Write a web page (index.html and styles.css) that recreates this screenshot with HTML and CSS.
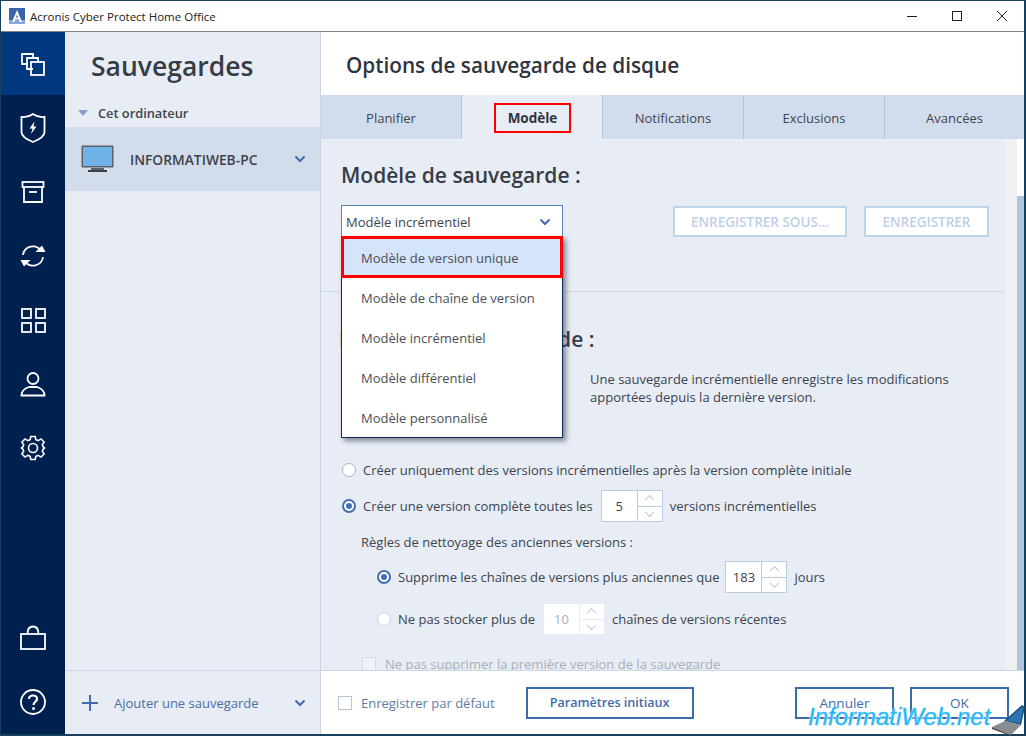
FILE: index.html
```html
<!DOCTYPE html>
<html lang="fr">
<head>
<meta charset="utf-8">
<title>Acronis Cyber Protect Home Office</title>
<link rel="stylesheet" href="styles.css">
</head>
<body>
<div class="window">
  <header class="titlebar">
    <svg class="app-logo" width="16" height="16" viewBox="0 0 16 16"><rect width="16" height="16" fill="#3b63ae"/><rect x="0" y="12" width="16" height="4" fill="#8ba6dc"/><path d="M3 14 L8 2 L13 14 H10.700 L9.800 11.500 H6.200 L5.300 14 Z M7 9.500 H9 L8 6.500 Z" fill="#fff" fill-rule="evenodd"/></svg>
    <span class="app-title">Acronis Cyber Protect Home Office</span>
    <div class="win-controls">
      <svg width="12" height="12" viewBox="0 0 12 12"><path d="M1 6.500 H11" stroke="#222" fill="none"/></svg>
      <svg width="12" height="12" viewBox="0 0 12 12"><rect x="1.500" y="1.500" width="9" height="9" stroke="#222" fill="none"/></svg>
      <svg width="12" height="12" viewBox="0 0 12 12"><path d="M1 1 L11 11 M11 1 L1 11" stroke="#222" fill="none"/></svg>
    </div>
  </header>
  <div class="main">
    <nav class="nav">
      <a class="nav-item active"><svg width="26" height="26" viewBox="0 0 26 26" fill="none" stroke="#fff" stroke-width="1.800"><path d="M8 13 H2 V3 H13 V7"/><path d="M13 18 H7 V7 H18 V11"/><rect x="11" y="11" width="13" height="13"/></svg></a>
      <a class="nav-item"><svg width="26" height="32" viewBox="0 0 26 32" fill="none" stroke="#fff" stroke-width="1.800"><path d="M13 2 C9 5 5 5.500 1.500 5 V20 C1.500 25 8 28 13 30 C18 28 24.500 25 24.500 20 V5 C21 5.500 17 5 13 2 Z"/><path d="M14.500 9.500 L9.500 16.500 H12.500 L11 22 L16.500 14.500 H13.500 Z" fill="#fff" stroke="none"/></svg></a>
      <a class="nav-item"><svg width="24" height="24" viewBox="0 0 24 24" fill="none" stroke="#fff" stroke-width="1.800"><rect x="1.500" y="2" width="21" height="5"/><path d="M3 7 V22 H21 V7"/><path d="M8 12 H16"/></svg></a>
      <a class="nav-item"><svg width="28" height="26" viewBox="0 0 28 26" fill="none" stroke="#fff" stroke-width="1.800"><path d="M4 12 A10 10 0 0 1 22 7.500"/><path d="M24 14 A10 10 0 0 1 6 18.500"/><path d="M16.500 9 H26.500 L23 2.500 Z" fill="#fff" stroke="none"/><path d="M11.500 17 H1.500 L5 23.500 Z" fill="#fff" stroke="none"/></svg></a>
      <a class="nav-item"><svg width="26" height="26" viewBox="0 0 26 26" fill="none" stroke="#fff" stroke-width="1.800"><rect x="2" y="2" width="9" height="9"/><rect x="16" y="2" width="9" height="9"/><rect x="2" y="16" width="9" height="9"/><rect x="16" y="16" width="9" height="9"/></svg></a>
      <a class="nav-item"><svg width="26" height="26" viewBox="0 0 26 26" fill="none" stroke="#fff" stroke-width="1.800"><circle cx="13" cy="7.500" r="5.500"/><path d="M1.500 24.500 C1.500 19.500 6 17 9 16 H17 C20 17 24.500 19.500 24.500 24.500 Z"/></svg></a>
      <a class="nav-item"><svg width="26" height="26" viewBox="0 0 26 26" fill="none" stroke="#fff" stroke-width="1.600"><circle cx="13" cy="13" r="4.500"/><path d="M10.800 1.500 H15.200 L15.900 4.700 L18.200 5.700 L21 3.900 L24.100 7 L22.300 9.800 L23.300 12.100 L24.500 12.800 V13.200 L23.300 13.900 L22.300 16.200 L24.100 19 L21 22.100 L18.200 20.300 L15.900 21.300 L15.200 24.500 H10.800 L10.100 21.300 L7.800 20.300 L5 22.100 L1.900 19 L3.700 16.200 L2.700 13.900 L1.500 13.200 V12.800 L2.700 12.100 L3.700 9.800 L1.900 7 L5 3.900 L7.800 5.700 L10.100 4.700 Z"/></svg></a>
      <div class="nav-spacer"></div>
      <a class="nav-item"><svg width="28" height="26" viewBox="0 0 28 26" fill="none" stroke="#fff" stroke-width="1.800"><rect x="2" y="9" width="24" height="15"/><path d="M8.500 9 C8.500 4 10.500 1.500 14 1.500 C17.500 1.500 19.500 4 19.500 9"/></svg></a>
      <a class="nav-item"><svg width="28" height="28" viewBox="0 0 28 28" fill="none" stroke="#fff" stroke-width="1.800"><circle cx="14" cy="14" r="12"/><path d="M10 11 C10 8.500 12 7.500 14 7.500 C16.500 7.500 18 9 18 11 C18 13.500 14.500 14 14.500 17" stroke-width="2.200"/><circle cx="14.500" cy="20.500" r="1.500" fill="#fff" stroke="none"/></svg></a>
    </nav>
    <aside class="side">
      <h1 class="side-title">Sauvegardes</h1>
      <div class="side-group"><span class="tri"></span>Cet ordinateur</div>
      <div class="side-item">
        <svg width="34" height="28" viewBox="0 0 34 28"><rect x="0.500" y="0.500" width="32" height="22" rx="1" fill="#5c6067"/><rect x="2" y="2" width="29" height="19" fill="#6fb3e8"/><rect x="10" y="23" width="13" height="2" fill="#5c6067"/><rect x="7" y="25" width="19" height="2" fill="#3d4045"/></svg>
        <span class="side-item-name">INFORMATIWEB-PC</span>
        <svg class="chev" width="12" height="8" viewBox="0 0 12 8"><path d="M1.500 1.500 L6 6 L10.500 1.500" fill="none" stroke="#3f6cab" stroke-width="2"/></svg>
      </div>
      <div class="side-footer">
        <svg width="18" height="18" viewBox="0 0 18 18"><path d="M9 1 V17 M1 9 H17" stroke="#3f6cab" stroke-width="2" fill="none"/></svg>
        <span class="side-add">Ajouter une sauvegarde</span>
        <svg class="chev" width="12" height="8" viewBox="0 0 12 8"><path d="M1.500 1.500 L6 6 L10.500 1.500" fill="none" stroke="#3f6cab" stroke-width="2"/></svg>
      </div>
    </aside>
    <section class="panel">
      <h1 class="panel-title">Options de sauvegarde de disque</h1>
      <div class="tabs">
        <div class="tab">Planifier</div>
        <div class="tab active"><span class="tab-mark">Modèle</span></div>
        <div class="tab">Notifications</div>
        <div class="tab">Exclusions</div>
        <div class="tab">Avancées</div>
      </div>
      <div class="content">
        <div class="scroll-body">
          <h2 class="h2 h2-first">Modèle de sauvegarde :</h2>
          <div class="model-row">
            <div class="select">Modèle incrémentiel
              <svg width="12" height="8" viewBox="0 0 12 8"><path d="M1.500 1.500 L6 6 L10.500 1.500" fill="none" stroke="#3f6cab" stroke-width="2"/></svg>
            </div>
            <button class="ghost ghost-as">ENREGISTRER SOUS...</button>
            <button class="ghost ghost-s">ENREGISTRER</button>
          </div>
          <ul class="menu">
            <li class="menu-item sel">Modèle de version unique</li>
            <li class="menu-item">Modèle de chaîne de version</li>
            <li class="menu-item">Modèle incrémentiel</li>
            <li class="menu-item">Modèle différentiel</li>
            <li class="menu-item last">Modèle personnalisé</li>
          </ul>
          <hr class="rule">
          <h2 class="h2 h2-second">Méthode de sauvegarde :</h2>
          <p class="desc">Une sauvegarde incrémentielle enregistre les modifications apportées depuis la dernière version.</p>
          <div class="opt opt-1"><span class="radio"></span><span>Créer uniquement des versions incrémentielles après la version complète initiale</span></div>
          <div class="opt opt-2"><span class="radio on"></span><span>Créer une version complète toutes les</span>
            <span class="spin"><span class="spin-val">5</span><span class="spin-btns"><i class="up"></i><i class="down"></i></span></span>
            <span>versions incrémentielles</span></div>
          <div class="rules-label">Règles de nettoyage des anciennes versions :</div>
          <div class="opt opt-3"><span class="radio on"></span><span>Supprime les chaînes de versions plus anciennes que</span>
            <span class="spin"><span class="spin-val">183</span><span class="spin-btns"><i class="up"></i><i class="down"></i></span></span>
            <span>jours</span></div>
          <div class="opt opt-4"><span class="radio off"></span><span>Ne pas stocker plus de</span>
            <span class="spin dim"><span class="spin-val">10</span><span class="spin-btns"><i class="up"></i><i class="down"></i></span></span>
            <span>chaînes de versions récentes</span></div>
          <div class="opt opt-5"><span class="check dim"></span><span>Ne pas supprimer la première version de la sauvegarde</span></div>
        </div>
        <div class="track"></div>
        <div class="bar"><div class="thumb"></div></div>
      </div>
      <footer class="footer">
        <span class="check"></span>
        <span class="save-default">Enregistrer par défaut</span>
        <button class="btn btn-reset">Paramètres initiaux</button>
        <button class="btn btn-cancel">Annuler</button>
        <button class="btn btn-ok">OK</button>
      </footer>
    </section>
  </div>
</div>
<div class="watermark">InformatiWeb.net</div>
<svg class="wm-laptop" width="34" height="32" viewBox="0 0 34 32"><path d="M12 17 L30 1 L33 3 L29 21 Z" fill="#1c4e7e"/><path d="M14 17 L30 3 L31.500 4 L28 19 Z" fill="#2d74b4"/><path d="M0 23 L13 17 L29 21 L19 31 Z" fill="#8a8d90"/><path d="M0 23 L19 31 L19 32 L0 25 Z" fill="#4a4c50"/></svg>
</body>
</html>
```
FILE: styles.css
```css
* { box-sizing: border-box; }
html, body { margin: 0; padding: 0; }
body {
  width: 1026px; height: 736px; overflow: hidden; position: relative;
  font-family: "Open Sans", "Noto Sans", sans-serif; font-size: 13px; color: #3c434d;
}
.window {
  width: 1026px; height: 736px; display: flex; flex-direction: column;
  border: 1px solid #17405f; border-right-width: 2px; border-bottom-width: 2px; background: #fff;
}
.titlebar {
  height: 31px; flex: none; display: flex; align-items: center;
  border-bottom: 1px solid #7d8288; background: #fff; padding-left: 8px;
}
.app-logo { flex: none; margin-top: -1px; }
.app-title { margin-left: 5px; font-size: 11.500px; color: #222; }
.win-controls { margin-left: auto; display: flex; gap: 33px; margin-right: 16px; margin-top: -1px; }
.main { flex: 1; display: flex; min-height: 0; }

.nav { width: 64px; flex: none; background: #00204f; display: flex; flex-direction: column; }
.nav-item { height: 64px; flex: none; display: flex; align-items: center; justify-content: center; }
.nav-item.active { background: #00387f; height: 63px; }
.nav-item.active + .nav-item { height: 65px; }
.nav-spacer { flex: 1; }

.side {
  width: 256px; flex: none; background: #e7ecf5; border-right: 1px solid #ccd5e3;
  display: flex; flex-direction: column;
}
.side-title { margin: 15px 0 0 26px; font-size: 26.500px; line-height: 38px; font-weight: 600; color: #363c45; }
.side-group { margin-top: 13px; height: 29px; display: flex; align-items: center; padding-left: 13px; font-weight: 600; color: #3f454e; font-size: 12.800px; }
.tri { width: 0; height: 0; border: 5px solid transparent; border-top: 6px solid #87a0c8; border-bottom: 0; margin-right: 10px; }
.side-item {
  height: 64px; background: #d3dcea; display: flex; align-items: center; padding-left: 16px; padding-right: 14px;
}
.side-item-name { margin-left: 15px; font-weight: 600; font-size: 13.800px; color: #3c434d; }
.chev { margin-left: auto; }
.side-footer {
  margin-top: auto; height: 64px; border-top: 1px solid #ccd5e3; display: flex; align-items: center;
  padding-left: 16px; padding-right: 14px;
}
.side-add { margin-left: 15px; color: #4b6fa5; }

.panel { flex: 1; min-width: 0; display: flex; flex-direction: column; background: #fff; }
.panel-title { margin: 0; height: 63px; padding: 15px 0 0 25px; font-size: 20.750px; line-height: 36px; font-weight: 600; color: #2f353e; }
.tabs { height: 44px; flex: none; display: flex; background: #d1dcec; }
.tab {
  width: 141px; display: flex; align-items: center; justify-content: center; color: #3f454e;
  border-right: 1px solid #b4c2d6; padding-top: 1px;
}
.tab:last-child { border-right: 0; flex: 1; }
.tab.active { background: #e7ecf5; font-weight: 700; font-size: 13.500px; color: #2f353e; padding: 2px 0 0 1px; }
.tab-mark { display: block; border: 2px solid #f00; height: 30px; line-height: 26px; padding: 0 12px; }
.content { flex: 1; min-height: 0; display: flex; overflow: hidden; }
.scroll-body { width: 684px; flex: none; background: #e7ecf5; position: relative; overflow: hidden; }
.track { width: 12px; flex: none; background: #eef0f1; }
.bar { flex: 1; background: #b0c4de; }
.thumb { height: 57px; background: #fff; }

.h2 { margin: 0; font-size: 21px; line-height: 28px; font-weight: 600; color: #363c45; }
.h2-first { margin: 22px 0 0 20px; }
.model-row { margin: 16px 0 0 20px; display: flex; align-items: flex-start; }
.select {
  width: 222px; height: 32px; background: #fff; border: 1px solid #5a83b8;
  display: flex; align-items: center; justify-content: space-between; padding: 1px 11px 0 4px;
}
.ghost {
  font: inherit; font-size: 13.500px; font-weight: 600; color: #bdd0e5; background: #fff; border: 2px solid #bdd3e8;
  height: 31px; padding: 0; margin-top: 1px;
}
.ghost-as { width: 174px; margin-left: 110px; }
.ghost-s { width: 125px; margin-left: 17px; }
.menu {
  position: absolute; left: 20px; top: 97px; width: 222px; margin: 0; padding: 0; list-style: none;
  background: #fff; border: 1px solid #0f2a52; box-shadow: 3px 3px 5px rgba(40,50,70,.55);
}
.menu-item { height: 40px; display: flex; align-items: center; padding-left: 19px; color: #4a4f56; }
.menu-item.last { height: 39px; }
.menu-item.sel { background: #d4e4fb; outline: 3px solid #f00; outline-offset: -3px; margin: -1px -1px 0; padding: 1px 0 0 20px; height: 42px; position: relative; }
.rule { margin: 54px 0 0 0; border: 0; border-top: 1px solid #d3dbe8; }
.h2-second { margin: 33px 0 0 18px; }
.desc { margin: 17px 0 0 269px; width: 380px; line-height: 18px; color: #3c434d; }
.opt { display: flex; align-items: center; color: #3c434d; white-space: nowrap; }
.radio { width: 14px; height: 14px; border-radius: 50%; border: 1px solid #a9b6c8; background: #fff; flex: none; margin-right: 7px; position: relative; }
.radio.on { border: 2px solid #4470b3; }
.radio.on::after { content: ""; position: absolute; left: 2px; top: 2px; width: 6px; height: 6px; border-radius: 50%; background: #4470b3; }
.radio.off { border-color: #c5cfdd; }
.opt-1 { margin: 55px 0 0 21px; height: 18px; }
.opt-2 { margin: 11px 0 0 21px; height: 32px; }
.rules-label { margin: 11px 0 0 40px; height: 18px; line-height: 18px; }
.opt-3 { margin: 10px 0 0 56px; height: 32px; }
.opt-4 { margin: 10px 0 0 56px; height: 32px; }
.opt-5 { margin: 20px 0 0 41px; height: 18px; color: #a9afb8; }
.spin {
  height: 32px; display: inline-flex; background: #fff; border: 1px solid #bccbe0; margin: 0 7px 0 8px;
}
.opt-3 .spin { margin-left: 6px; }
.spin-val { width: 35px; display: flex; align-items: center; justify-content: center; font-size: 13px; }
.spin-btns { width: 25px; border-left: 1px solid #bccbe0; display: flex; flex-direction: column; }
.spin-btns i { flex: 1; display: flex; align-items: center; justify-content: center; }
.spin-btns i.up { border-bottom: 1px solid #bccbe0; }
.spin-btns i::after { content: ""; width: 6px; height: 6px; border-left: 1.500px solid #bcc5d2; border-top: 1.500px solid #bcc5d2; transform: rotate(45deg) translate(1px, 1px); }
.spin-btns i.down::after { transform: rotate(225deg) translate(1px, 1px); }
.spin.dim { border-color: #e6ebf3; color: #a9afb8; }
.spin.dim .spin-btns, .spin.dim .spin-btns i.up { border-color: #e6ebf3; }
.check { width: 14px; height: 14px; border: 1px solid #b8c4d6; background: #fff; flex: none; }
.check.dim { background: #eef1f6; border-color: #d5dce8; margin-right: 9px; }

.footer { height: 64px; flex: none; border-top: 1px solid #ccd5e3; display: flex; align-items: center; padding-left: 17px; padding-right: 15px; background: #fff; }
.save-default { margin-left: 9px; color: #5d7ca9; }
.btn { font: inherit; font-weight: 600; color: #3f6cab; background: #fff; border: 2px solid #3a6cad; height: 32px; padding: 0; }
.btn-reset { width: 168px; margin-left: 31px; font-size: 12.600px; }
.btn-cancel { width: 99px; margin-left: auto; font-weight: 400; font-size: 13.500px; }
.btn-ok { width: 99px; margin-left: 16px; font-weight: 400; font-size: 13.500px; }

.watermark {
  position: absolute; left: 808px; top: 701px; font-family: "Liberation Sans", sans-serif; font-style: italic;
  font-size: 24px; line-height: 32px; color: #1fb4f5; -webkit-text-stroke: 0.5px #4cc6fb;
  text-shadow: 0 0 2px #fff, 1px 1px 1px #fff;
}
.wm-laptop { position: absolute; left: 992px; top: 704px; }
```
